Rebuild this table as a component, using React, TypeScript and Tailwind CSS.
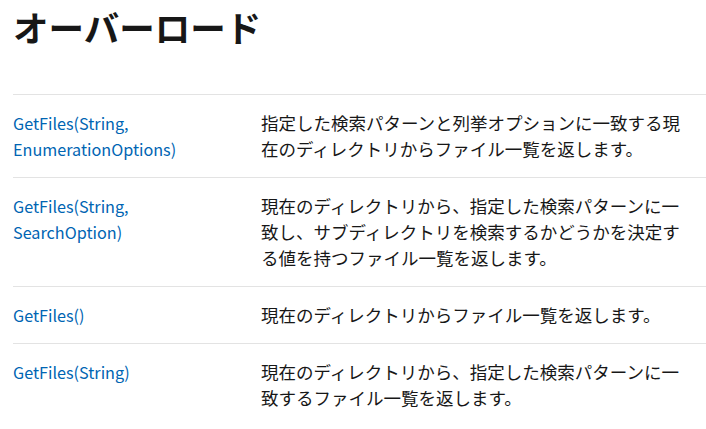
const rows = [
    {
        name: "GetFiles(String, EnumerationOptions)",
        desc: "指定した検索パターンと列挙オプションに一致する現在のディレクトリからファイル一覧を返します。",
    },
    {
        name: "GetFiles(String, SearchOption)",
        desc: "現在のディレクトリから、指定した検索パターンに一致し、サブディレクトリを検索するかどうかを決定する値を持つファイル一覧を返します。",
    },
    {
        name: "GetFiles()",
        desc: "現在のディレクトリからファイル一覧を返します。",
    },
    {
        name: "GetFiles(String)",
        desc: "現在のディレクトリから、指定した検索パターンに一致するファイル一覧を返します。",
    },
]

export default function App() {
    return (
        <div className="w-[706px] h-[429px] overflow-hidden bg-white pl-[13px] text-[#171717] font-['Noto_Sans_CJK_JP',sans-serif]">
            <h1 className="pt-[4px] text-[35.5px] leading-[46px] font-bold">オーバーロード</h1>
            <div className="mt-[44px] flex flex-col">
                {rows.map((row) => (
                    <div key={row.name} className="grid grid-cols-[248px_1fr] border-t border-[#e3e3e3] py-[15px] leading-[26px]">
                        <a href="#" className="pr-[50px] text-[16.2px] text-[#0065b3]">{row.name}</a>
                        <p className="pr-[22px] text-[17.5px]">{row.desc}</p>
                    </div>
                ))}
            </div>
        </div>
    )
}
